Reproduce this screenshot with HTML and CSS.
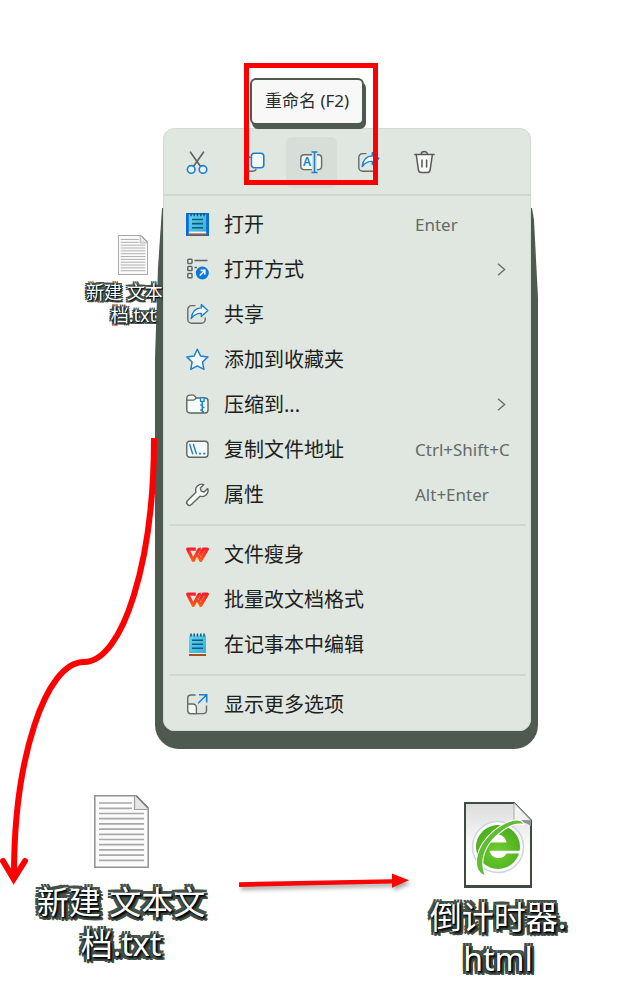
FILE: index.html
```html
<!DOCTYPE html>
<html lang="zh-CN">
<head>
<meta charset="utf-8">
<meta name="viewport" content="width=device-width, initial-scale=1">
<title>重命名</title>
<link rel="stylesheet" href="styles.css">
</head>
<body>
<svg class="defs" aria-hidden="true">
  <defs>
    <linearGradient id="pad" x1="0" y1="0" x2="1" y2="1"><stop offset="0" stop-color="#62d3ef"/><stop offset="1" stop-color="#36afd6"/></linearGradient>
    <linearGradient id="wps" x1="0" y1="0" x2="0" y2="1"><stop offset="0" stop-color="#f5202c"/><stop offset="1" stop-color="#ff5a12"/></linearGradient>
    <linearGradient id="paper" x1="0" y1="0" x2="0" y2="1"><stop offset="0" stop-color="#dcdcdc"/><stop offset=".6" stop-color="#ffffff"/></linearGradient>
    <radialGradient id="green" cx=".5" cy=".6" r=".6"><stop offset="0" stop-color="#6fce2e"/><stop offset="1" stop-color="#4bac20"/></radialGradient>
    <symbol id="doc" viewBox="0 0 55 73">
      <path d="M.8.8H42L54.2 13V72.2H.8Z" fill="#fbfbfb" stroke="#8f9391" stroke-width="1.5"/>
      <path d="M40.5 1V14.5H54" fill="#e4e6e5" stroke="#9b9f9d" stroke-width="1.2"/>
      <path d="M42.5 1 54 13" stroke="#767b78" stroke-width="1.6"/>
      <path d="M5 8H38M5 13.3H38M5 18.5H50M5 23.7H50M5 28.9H50M5 34.1H50M5 39.3H50M5 44.5H50M5 49.7H50M5 54.9H50M5 60.1H50M5 65.3H50" stroke="#a9a9a9" stroke-width="1.7"/>
    </symbol>
    <symbol id="share" viewBox="0 0 23 23">
      <path d="M9 2.6H5.5A3.7 3.7 0 0 0 1.8 6.3V16.5A3.7 3.7 0 0 0 5.5 20.2H15.5A3.7 3.7 0 0 0 19.2 16.5V15" fill="none" stroke="#666b67" stroke-width="1.4" stroke-linecap="round"/>
      <path d="M15.3 1.6 21.8 7.6 15.3 13.6V10.4C11 10.1 8 11.8 5.2 15.6 5.9 9 9.2 5.1 15.3 4.9Z" fill="#f6faf8" stroke="#1a80d2" stroke-width="1.4" stroke-linejoin="round"/>
    </symbol>
    <symbol id="wps-logo" viewBox="0 0 23 23">
      <path d="M9.8 6.2H1.7L7.2 17.4 12.2 7.8C12.8 6.6 13.5 6.2 14.8 6.2M11.8 12 14.8 17.4 21.3 6.2H17.2L13.8 12.6" fill="none" stroke="url(#wps)" stroke-width="3.2" stroke-linejoin="round"/>
    </symbol>
  </defs>
</svg>

<main>
  <section class="scene">
    <figure class="file file-small">
      <svg class="doc" aria-hidden="true"><use href="#doc"/></svg>
      <figcaption>新建 文本文<br>档.txt</figcaption>
    </figure>

    <div class="menu">
      <div class="toolbar">
        <button class="tool" type="button" aria-label="剪切"><svg class="icon" viewBox="0 0 23 23"><path d="M4.5 1.2 14.4 15.2M17.5 1.2 7.6 15.2" stroke="#5c625e" stroke-width="1.6" stroke-linecap="round"/><g fill="#eaf3f4" stroke="#1a80d2" stroke-width="1.6"><circle cx="5.2" cy="18.4" r="3.8"/><circle cx="17" cy="18.4" r="3.8"/></g></svg></button>
        <button class="tool" type="button" aria-label="复制"><svg class="icon" viewBox="0 0 23 23"><path d="M5.5 20.2H9.8C11.6 20.2 12.8 19.4 13.2 18M5.5 6.2H8" fill="none" stroke="#666b67" stroke-width="1.4"/><rect x="8.4" y="2.3" width="12.4" height="14.5" rx="3" fill="#f6faf8" stroke="#1a80d2" stroke-width="1.6"/></svg></button>
        <button class="tool active" type="button" aria-label="重命名"><svg class="icon" viewBox="0 0 23 23"><rect x=".8" y="3.8" width="20.8" height="14.8" rx="3.4" fill="#f3f7f4" stroke="#666b67" stroke-width="1.4"/><path d="M14.5 2V20.5" stroke="#dce3dc" stroke-width="5"/><path d="M11.5 1H17.5M11.5 21.5H17.5M14.5 1V21.5" stroke="#1a80d2" stroke-width="1.6"/><text class="letter" x="3" y="15">A</text></svg></button>
        <button class="tool" type="button" aria-label="共享"><svg class="icon"><use href="#share"/></svg></button>
        <button class="tool" type="button" aria-label="删除"><svg class="icon" viewBox="0 0 23 23"><path d="M2.2 3.5 4.5 19.2A2.8 2.8 0 0 0 7.3 21.6H13.3A2.8 2.8 0 0 0 16.1 19.2L18.4 3.5" fill="#f8faf8" stroke="#555b57" stroke-width="1.5"/><path d="M.2 3.4H20.6M7.2 3.2A3.1 2.6 0 0 1 13.4 3.2" fill="none" stroke="#555b57" stroke-width="1.5"/><path d="M8 9V16M12.6 9V16" stroke="#555b57" stroke-width="1.5" stroke-linecap="round"/></svg></button>
      </div>

      <ul class="group group-first">
        <li><button class="item" type="button"><svg class="icon" viewBox="0 0 23 23"><path d="M0 0H23V23H0Z" fill="#0b6ad3"/><path d="M2.8 1.5H20.2V19H2.8Z" fill="url(#pad)"/><path d="M2.8 18.6H20.2V21H2.8Z" fill="#f2f5f3"/><path d="M2.8 21.3H20.2" stroke="#b0592a" stroke-width="1.8"/><path d="M5 0V3.2M8.2 0V3.2M11.5 0V3.2M14.8 0V3.2M18 0V3.2" stroke="#0c567c" stroke-width="1.4"/><path d="M6 6.5H17M6 10.6H17M6 14.7H17" stroke="#0d5b80" stroke-width="1.6"/></svg><span>打开</span><kbd>Enter</kbd></button></li>
        <li><button class="item" type="button"><svg class="icon" viewBox="0 0 23 23"><g fill="#eef3ef" stroke="#5f6561" stroke-width="1.5"><rect x="1.8" y="1.2" width="4.2" height="4.2" rx=".8"/><rect x="1.8" y="8.4" width="4.2" height="4.2" rx=".8"/><rect x="1.8" y="15.6" width="4.2" height="4.2" rx=".8"/><path d="M8.5 2.6H21.5M8.5 9.6H11"/></g><circle cx="16.3" cy="15" r="6.5" fill="#0a78d8"/><path d="M13.8 17.5 18.5 12.8M14.6 12.4H18.8V16.6" fill="none" stroke="#fff" stroke-width="1.6"/></svg><span>打开方式</span><svg class="chevron" viewBox="0 0 9 13"><path d="M1 .8 7.6 6.5 1 12.2"/></svg></button></li>
        <li><button class="item" type="button"><svg class="icon"><use href="#share"/></svg><span>共享</span></button></li>
        <li><button class="item" type="button"><svg class="icon" viewBox="0 0 23 23"><path d="M11.3 1.2 14.5 7.9 21.9 8.9 16.5 14 17.9 21.3 11.3 17.8 4.8 21.3 6.1 14 .8 8.9 8.2 7.9Z" fill="#f6faf8" stroke="#1a80d2" stroke-width="1.5" stroke-linejoin="round"/></svg><span>添加到收藏夹</span></button></li>
        <li><button class="item" type="button"><svg class="icon" viewBox="0 0 23 23"><path d="M.8 5.1A3 3 0 0 1 3.8 2.1H7.6L10.6 5H19A3 3 0 0 1 22 8V17A3 3 0 0 1 19 20H3.8A3 3 0 0 1 .8 17Z" fill="#f6faf8" stroke="#5f6561" stroke-width="1.4"/><path d="M1 7.2H7.2Q8.4 7.2 10.4 5" fill="none" stroke="#5f6561" stroke-width="1.2"/><rect x="14.5" y="4.8" width="3.6" height="3.6" fill="#f6faf8" stroke="#1a80d2" stroke-width="1.3"/><path d="M16.3 8.4V20M14.2 12H16.3M16.3 14.5H18.5M14.2 17H16.3M16.3 18.8H18" stroke="#1a80d2" stroke-width="1.5"/></svg><span>压缩到...</span><svg class="chevron" viewBox="0 0 9 13"><path d="M1 .8 7.6 6.5 1 12.2"/></svg></button></li>
        <li><button class="item" type="button"><svg class="icon" viewBox="0 0 23 23"><rect x=".8" y="3.3" width="21.2" height="16" rx="3" fill="#f6faf8" stroke="#5f6561" stroke-width="1.4"/><path d="M3.6 6 6.8 16.2M7.3 6 10.5 16.2" stroke="#1a80d2" stroke-width="1.4"/><path d="M13 15.6H15M17.3 15.6H19.3" stroke="#1a80d2" stroke-width="1.8"/></svg><span>复制文件地址</span><kbd>Ctrl+Shift+C</kbd></button></li>
        <li><button class="item" type="button"><svg class="icon" viewBox="0 0 23 23"><path d="M17.8 1.6A6 6 0 0 0 10 9.2L1.6 17.6A2.7 2.7 0 0 0 5.4 21.6L14 13.2A6 6 0 0 0 21.7 5.6L18.2 9 15.2 8.1 14.3 5Z" fill="#f6faf8" stroke="#5f6561" stroke-width="1.4" stroke-linejoin="round"/></svg><span>属性</span><kbd>Alt+Enter</kbd></button></li>
      </ul>

      <ul class="group">
        <li><button class="item" type="button"><svg class="icon"><use href="#wps-logo"/></svg><span>文件瘦身</span></button></li>
        <li><button class="item" type="button"><svg class="icon"><use href="#wps-logo"/></svg><span>批量改文档格式</span></button></li>
        <li><button class="item" type="button"><svg class="icon" viewBox="0 0 23 23"><path d="M3 2.4H20V20H3Z" fill="url(#pad)"/><path d="M3 20.2H20V21.2H3Z" fill="#eef2ef"/><path d="M3 22H20" stroke="#a5501f" stroke-width="2"/><path d="M5 .4V3.6M8.2 .4V3.6M11.5 .4V3.6M14.8 .4V3.6M18 .4V3.6" stroke="#0c567c" stroke-width="1.5"/><path d="M6 7.2H17M6 11.2H17M6 15.2H17" stroke="#0d5b80" stroke-width="1.6"/></svg><span>在记事本中编辑</span></button></li>
      </ul>

      <ul class="group">
        <li><button class="item" type="button"><svg class="icon" viewBox="0 0 23 23"><path d="M9.6 2H5A3.3 3.3 0 0 0 1.7 5.3V17.3A3.3 3.3 0 0 0 5 20.6H17.2A3.3 3.3 0 0 0 20.5 17.3V12.6" fill="none" stroke="#666b67" stroke-width="1.4"/><path d="M1.7 11H7A3.4 3.4 0 0 1 10.4 14.4V20.6H5A3.3 3.3 0 0 1 1.7 17.3Z" fill="#f6faf8" stroke="#666b67" stroke-width="1.4"/><path d="M12.2 10.2 20.4 2M13 1.7H20.7V9.6" fill="none" stroke="#1a80d2" stroke-width="1.6"/></svg><span>显示更多选项</span></button></li>
      </ul>

      <div class="tooltip" role="tooltip">重命名 (F2)</div>
      <div class="marker"></div>
    </div>
  </section>

  <section class="result">
    <figure class="file">
      <svg class="doc" aria-hidden="true"><use href="#doc"/></svg>
      <figcaption>新建 文本文<br>档.txt</figcaption>
    </figure>
    <svg class="arrow" viewBox="0 0 170 24" aria-hidden="true">
      <path d="M-3 13.2 150 10.2V4.5L167 11.2 150 18.8V14.4L-3 18Z" fill="#f80505"/>
    </svg>
    <figure class="file file-html">
      <svg class="page" viewBox="0 0 68 86" aria-hidden="true">
        <path d="M1 1H50L67 18.5V85H1Z" fill="url(#paper)" stroke="#3e4b41" stroke-width="2"/>
        <path d="M1 84.5H67" stroke="#3e4b41" stroke-width="3"/>
        <circle cx="34" cy="45" r="25.5" fill="#fff" stroke="#ccd4dc" stroke-width="1.5"/>
        <path d="M50 1V18.5H67Z" fill="#f2f2f2" stroke="#a7aaa8" stroke-width="1"/>
        <path d="M50 18.5H67V24Q60 19 50 18.5Z" fill="#8e918f"/>
        <circle cx="34" cy="45" r="22" fill="url(#green)"/>
        <path d="M25.5 40.5C27 35 31 32.5 34 32.5S41.5 35 42.5 40.5Z" fill="#fff"/>
        <path d="M25.5 48.8H57V51.4H42.5C41 54.5 38 56 34 56S26.5 53 25.5 48.8Z" fill="#fff"/>
        <path d="M20.5 73C8 68 11 46 29 30 41 19.5 56 14.5 59 22 50 20 40 26 31 34.5 19 46 15.5 60 20.5 73Z" fill="#61bd35" stroke="#fff" stroke-width="2" paint-order="stroke"/>
      </svg>
      <figcaption>倒计时器.<br>html</figcaption>
    </figure>
  </section>

  <svg class="curve" viewBox="0 0 163 450" preserveAspectRatio="none" aria-hidden="true">
    <path d="M154 0C154 123 123 224 84 224S14 322 14 437" fill="none" stroke="#f00" stroke-width="6"/>
    <path d="M3 423 13.7 441 25 423" fill="none" stroke="#f00" stroke-width="6" stroke-linecap="round"/>
  </svg>
</main>
</body>
</html>
```
FILE: styles.css
```css
* {
  box-sizing: border-box;
}

body {
  margin: 0;
  background: #fff;
  color: #1d211e;
  font-family: "Noto Sans", "Noto Sans CJK SC", sans-serif;
}

main {
  position: relative;
  padding-bottom: 16px;
}

ul,
figure {
  margin: 0;
  padding: 0;
  list-style: none;
}

svg {
  display: block;
  overflow: visible;
}

.defs {
  position: absolute;
  width: 0;
  height: 0;
}

.scene {
  display: grid;
  grid-template-columns: minmax(0, 163fr) minmax(0, 368fr) minmax(0, 109fr);
  align-items: start;
  isolation: isolate;
  padding-top: 128px;
}

/* Desktop files */

.file {
  display: flex;
  flex-direction: column;
  align-items: center;
  gap: 13px;
}

.file .doc {
  width: 55px;
  height: 73px;
}

.file figcaption {
  color: #fff;
  font-size: 32px;
  line-height: 42px;
  text-align: center;
  white-space: nowrap;
  text-shadow:
    1px 1px 1px #000, 2px 2px 2px #0b100d, -1px 0 1px #12304f,
    -3px -3px 0 #465248, 0 -3px 0 #465248, 3px -3px 0 #465248,
    -3px 0 0 #465248, 3px 0 0 #465248,
    -3px 3px 0 #465248, 0 3px 0 #465248, 3px 3px 0 #465248,
    4px 4px 0 #465248, 0 4px 0 #465248, 4px 0 0 #465248;
}

.file-small {
  gap: 6px;
  width: max-content;
  margin: 107px 0 0 86px;
}

.file-small .doc {
  width: 30px;
  height: 40px;
}

.file-small figcaption {
  font-size: 18px;
  line-height: 23px;
  text-shadow:
    1px 1px 1px #000, -1px 0 1px #12304f,
    -2px -2px 0 #465248, 0 -2px 0 #465248, 2px -2px 0 #465248,
    -2px 0 0 #465248, 2px 0 0 #465248,
    -2px 2px 0 #465248, 0 2px 0 #465248, 2px 2px 0 #465248;
}

.file-html {
  gap: 8px;
  padding-top: 7px;
}

.page {
  width: 68px;
  height: 86px;
}

/* Context menu */

.menu {
  position: relative;
  padding-bottom: 4px;
  border-radius: 12px;
  background: #dfe7e0;
  box-shadow: inset 0 0 0 1px #d2dbd3;
}

.menu::before {
  content: "";
  position: absolute;
  z-index: -1;
  inset: 80px -7px -18px -8px;
  border-radius: 0 0 24px 24px;
  background: #4e5a4f;
  clip-path: polygon(7px 0, calc(100% - 6px) 0, calc(100% - 4px) 12px, 100% 90px, 100% 100%, 0 100%, 0 150px, 3px 60px);
}

.toolbar {
  display: flex;
  gap: 6px;
  padding: 9px 9px 6px;
}

.tool,
.item {
  border: 0;
  background: none;
  color: inherit;
  font: inherit;
}

.tool {
  display: grid;
  place-items: center;
  width: 51px;
  height: 51px;
  padding: 0;
  border-radius: 6px;
}

.tool.active {
  background: #d6ded7;
}

.icon {
  width: 23px;
  height: 23px;
}

.letter {
  fill: #1a80d2;
  font-size: 12px;
  font-weight: 600;
}

.group {
  margin: 0 5px 0 6px;
  padding: 6px 0 7px;
  border-top: 2px solid #d0d9d1;
}

.group-first {
  margin: 0;
  padding-right: 5px;
  padding-left: 6px;
}

.group:nth-of-type(3) {
  padding-bottom: 0;
}

.item {
  display: grid;
  grid-template-columns: 23px 1fr 111px;
  align-items: center;
  width: 100%;
  height: 45px;
  padding: 0 0 0 17px;
  font-size: 20px;
  line-height: 30px;
  text-align: left;
}

.item span {
  padding-left: 15px;
  white-space: nowrap;
}

.item kbd {
  color: #646b66;
  font-family: "Noto Sans", sans-serif;
  font-size: 17px;
  line-height: 26px;
  white-space: nowrap;
}

.chevron {
  justify-self: end;
  width: 9px;
  height: 13px;
  margin-right: 20px;
  fill: none;
  stroke: #6a716c;
  stroke-width: 1.4;
}

.tooltip {
  position: absolute;
  top: -50px;
  left: 87px;
  padding: 9px 13px 10px;
  border: 2px solid #4e5a4f;
  border-radius: 6px;
  background: #f8f8f8;
  box-shadow: 2px 4px 0 #4e5a4f;
  color: #2a2d2b;
  font-size: 17px;
  line-height: 24px;
  white-space: nowrap;
}

.marker {
  position: absolute;
  top: -65px;
  left: 81px;
  width: 134px;
  height: 122px;
  border: 5px solid #f00;
}

/* Result row */

.result {
  display: grid;
  grid-template-columns: minmax(0, 242fr) minmax(0, 170fr) minmax(0, 172fr) minmax(0, 56fr);
  align-items: start;
  margin-top: 64px;
}

.arrow {
  width: 100%;
  margin-top: 74px;
  filter: drop-shadow(2px 3px 2px rgb(0 0 0 / 35%));
}

.curve {
  position: absolute;
  z-index: 2;
  top: 438px;
  left: 0;
  width: 25.47%;
  height: 450px;
  pointer-events: none;
}
```
